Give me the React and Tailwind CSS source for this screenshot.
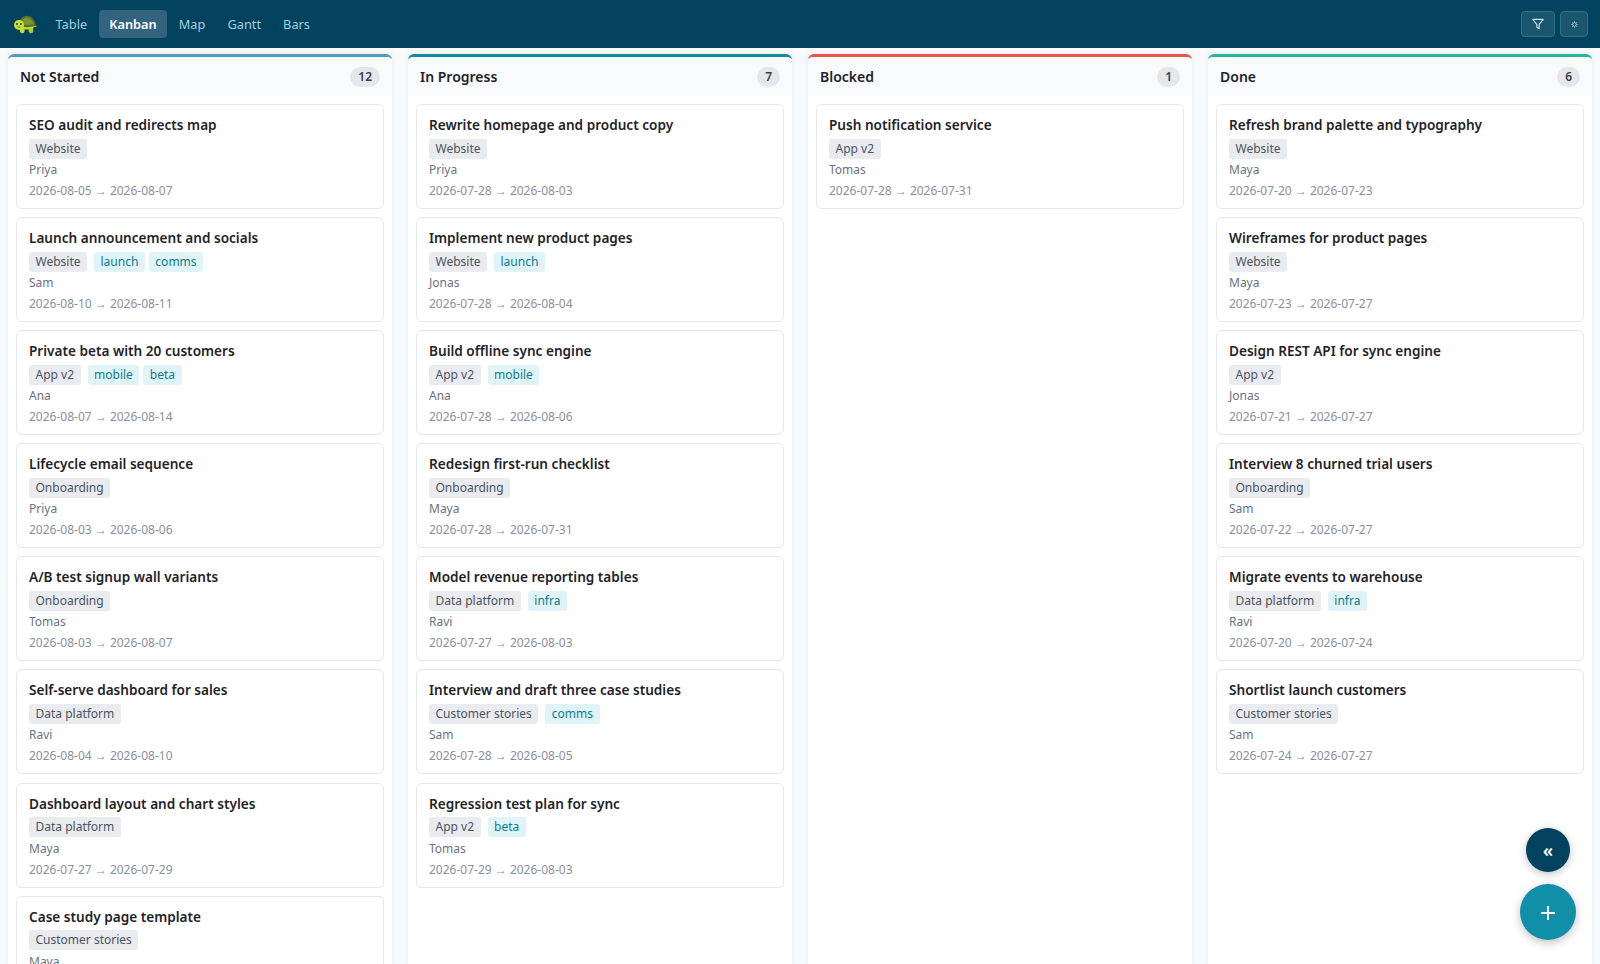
import React from "react";

const C = (title, project, tags, owner, start, end) => ({ title, project, tags, owner, start, end });

const columns = [
  { name: "Not Started", count: 12, bar: "border-t-[#4f9dbb]", cards: [
    C("SEO audit and redirects map", "Website", [], "Priya", "2026-08-05", "2026-08-07"),
    C("Launch announcement and socials", "Website", ["launch", "comms"], "Sam", "2026-08-10", "2026-08-11"),
    C("Private beta with 20 customers", "App v2", ["mobile", "beta"], "Ana", "2026-08-07", "2026-08-14"),
    C("Lifecycle email sequence", "Onboarding", [], "Priya", "2026-08-03", "2026-08-06"),
    C("A/B test signup wall variants", "Onboarding", [], "Tomas", "2026-08-03", "2026-08-07"),
    C("Self-serve dashboard for sales", "Data platform", [], "Ravi", "2026-08-04", "2026-08-10"),
    C("Dashboard layout and chart styles", "Data platform", [], "Maya", "2026-07-27", "2026-07-29"),
    C("Case study page template", "Customer stories", [], "Maya", "2026-07-29", "2026-07-31"),
  ]},
  { name: "In Progress", count: 7, bar: "border-t-[#118a9f]", cards: [
    C("Rewrite homepage and product copy", "Website", [], "Priya", "2026-07-28", "2026-08-03"),
    C("Implement new product pages", "Website", ["launch"], "Jonas", "2026-07-28", "2026-08-04"),
    C("Build offline sync engine", "App v2", ["mobile"], "Ana", "2026-07-28", "2026-08-06"),
    C("Redesign first-run checklist", "Onboarding", [], "Maya", "2026-07-28", "2026-07-31"),
    C("Model revenue reporting tables", "Data platform", ["infra"], "Ravi", "2026-07-27", "2026-08-03"),
    C("Interview and draft three case studies", "Customer stories", ["comms"], "Sam", "2026-07-28", "2026-08-05"),
    C("Regression test plan for sync", "App v2", ["beta"], "Tomas", "2026-07-29", "2026-08-03"),
  ]},
  { name: "Blocked", count: 1, bar: "border-t-[#e5544b]", cards: [
    C("Push notification service", "App v2", [], "Tomas", "2026-07-28", "2026-07-31"),
  ]},
  { name: "Done", count: 6, bar: "border-t-[#2ab5a0]", cards: [
    C("Refresh brand palette and typography", "Website", [], "Maya", "2026-07-20", "2026-07-23"),
    C("Wireframes for product pages", "Website", [], "Maya", "2026-07-23", "2026-07-27"),
    C("Design REST API for sync engine", "App v2", [], "Jonas", "2026-07-21", "2026-07-27"),
    C("Interview 8 churned trial users", "Onboarding", [], "Sam", "2026-07-22", "2026-07-27"),
    C("Migrate events to warehouse", "Data platform", ["infra"], "Ravi", "2026-07-20", "2026-07-24"),
    C("Shortlist launch customers", "Customer stories", [], "Sam", "2026-07-24", "2026-07-27"),
  ]},
];

function Turtle() {
  return (
    <svg width="24" height="22" viewBox="0 0 26 24" className="ml-[13px] shrink-0">
      <path d="M23 13l3 1.5-3 1z" fill="#b5d334" />
      <rect x="7.5" y="15" width="5" height="7" rx="2" fill="#c2dc3a" />
      <rect x="17" y="15" width="5" height="7" rx="2" fill="#aac82f" />
      <path d="M5 12h19c0 4-3 6-8 6H8c-3 0-4-3-3-6z" fill="#bcd936" />
      <path d="M6 14C6 7 10 3 15 3s9 4 10 11c-6 2-13 2-19 0z" fill="#55702a" />
      <path d="M9 12c.5-4 3-7 6-7s6 3 7.5 7c-4 1.500-9 1.500-13.500 0z" fill="#7d9436" />
      <circle cx="6.500" cy="13" r="5.500" fill="#c6e03c" />
      <circle cx="4.300" cy="12" r="1" fill="#2a2a1a" />
      <circle cx="8.500" cy="12" r="1" fill="#2a2a1a" />
      <path d="M4.500 15c1 .8 2.600.8 3.600 0" stroke="#2a2a1a" strokeWidth=".6" fill="none" />
    </svg>
  );
}

function Card({ c }) {
  return (
    <div className="bg-white border border-[#e5e7eb] rounded-[6px] px-3 pt-[10px] h-[105px] shrink-0">
      <div className="text-[13.6px] leading-[20px] font-semibold text-[#1f2328]">{c.title}</div>
      <div className="flex gap-[4px] mt-[3.5px]">
        <span className="bg-[#e9ebee] text-[#4b5563] text-[12px] leading-[20px] h-[20px] px-[6.5px] rounded-[3px] mr-[3px]">{c.project}</span>
        {c.tags.map((t) => (
          <span key={t} className="bg-[#e0f3f6] text-[#0e7c90] text-[12px] leading-[20px] h-[20px] px-[6.5px] rounded-[3px]">{t}</span>
        ))}
      </div>
      <div className="text-[12px] leading-[20px] text-[#6b7280] mt-[1.5px]">{c.owner}</div>
      <div className="text-[12px] leading-[20px] text-[#8a9099] mt-[1px] whitespace-nowrap">
        {c.start} → {c.end}
      </div>
    </div>
  );
}

function Column({ col }) {
  return (
    <div className={`flex-1 min-w-0 bg-white rounded-t-[6px] border-t-[3px] ${col.bar} shadow-[0_0_6px_rgba(15,40,60,0.08)] flex flex-col overflow-hidden`}>
      <div className="bg-[#f8fafc] h-[39px] shrink-0 flex items-center justify-between pl-[12px] pr-[12px]">
        <span className="text-[14px] font-semibold text-[#1f2328]">{col.name}</span>
        <span className="bg-[#e5e7eb] text-[#374151] text-[12px] font-semibold h-[20px] leading-[20px] px-[8px] rounded-full">{col.count}</span>
      </div>
      <div className="flex flex-col gap-[8.1px] px-[8px] pt-[8px] overflow-hidden flex-1 min-h-0">
        {col.cards.map((c) => <Card key={c.title} c={c} />)}
      </div>
    </div>
  );
}

export default function App() {
  return (
    <div className="relative h-[964px] w-[1600px] overflow-hidden bg-[#f8fafc] flex flex-col font-['Noto_Sans',sans-serif]">
      <nav className="h-[48px] shrink-0 bg-[#01425e] flex items-center">
        <Turtle />
        <div className="flex items-center gap-[2px] ml-[8.5px] text-[12.8px]">
          {["Table", "Kanban", "Map", "Gantt", "Bars"].map((t) => (
            <span key={t} className={t === "Kanban" ? "h-[28px] leading-[28px] px-[10px] rounded-[4px] bg-[#33637e] text-white font-semibold" : "h-[28px] leading-[28px] px-[10px] text-[#9fcfe0]"}>{t}</span>
          ))}
        </div>
        <div className="ml-auto flex gap-[5px] pr-[12px]">
          <button className="w-[34px] h-[26px] rounded-[4px] border border-[#2e6f8c] bg-[#1b566f] flex items-center justify-center">
            <svg width="14" height="14" viewBox="0 0 24 24" fill="none" stroke="#c6e4ee" strokeWidth="2" strokeLinejoin="round" strokeLinecap="round"><path d="M3 4h18l-7 8.5V20l-4-2.5v-5z" /></svg>
          </button>
          <button className="w-[28px] h-[26px] rounded-[4px] border border-[#2e6f8c] bg-[#1b566f] flex items-center justify-center">
            <svg width="7" height="7" viewBox="0 0 10 10" fill="none" stroke="#c6e4ee" strokeWidth="1"><circle cx="5" cy="5" r="2.6" /><path d="M5 .5v1.500M5 8v1.500M.5 5H2M8 5h1.500M1.800 1.800l1 1M7.200 7.200l1 1M8.200 1.800l-1 1M2.800 7.200l-1 1" /></svg>
          </button>
        </div>
      </nav>
      <main className="flex-1 min-h-0 flex gap-[16px] px-[8px] pt-[6px]">
        {columns.map((c) => <Column key={c.name} col={c} />)}
      </main>
      <button className="absolute right-[30px] bottom-[92px] w-[44px] h-[44px] rounded-full bg-[#01425e] text-white flex items-center justify-center shadow-[0_2px_8px_rgba(0,0,0,0.25)] text-[18px] font-semibold">«</button>
      <button className="absolute right-[24px] bottom-[24px] w-[56px] h-[56px] rounded-full bg-[#118fa8] flex items-center justify-center shadow-[0_3px_10px_rgba(0,0,0,0.25)] pt-[2px]">
        <svg width="14" height="14" viewBox="0 0 14 14" stroke="white" strokeWidth="2"><path d="M7 0v14M0 7h14" /></svg>
      </button>
    </div>
  );
}
